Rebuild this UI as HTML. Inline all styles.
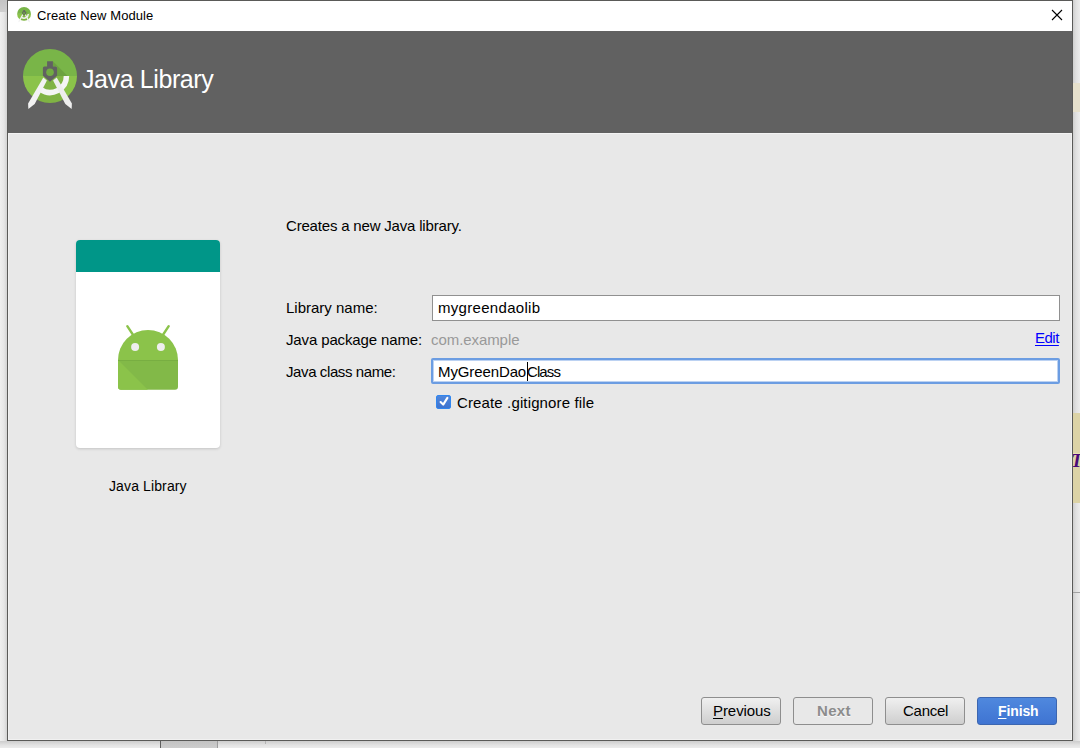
<!DOCTYPE html>
<html><head><meta charset="utf-8">
<style>
*{margin:0;padding:0;box-sizing:border-box}
html,body{width:1080px;height:748px;overflow:hidden;background:#eeeeee;font-family:"Liberation Sans",sans-serif;position:relative}
.abs{position:absolute}
#bgtl{left:0;top:0;width:7px;height:12px;background:linear-gradient(#c4c4c4,#cfcfcf)}
#shl{left:0;top:12px;width:7px;height:736px;background:linear-gradient(90deg,#efefef 0,#e6e6e6 4px,#d2d2d2 7px)}
#shr{left:1073px;top:0;width:7px;height:748px;background:linear-gradient(90deg,#cfcfcf 0,#e0e0e0 3px,#ececec 7px)}
#shb{left:0;top:741px;width:1080px;height:7px;background:linear-gradient(#cdcdcd 0,#e2e2e2 4px,#ececec 7px)}
#yel{left:1073px;top:413px;width:7px;height:90px;background:#dcd3a6}
#yel2{left:1073px;top:83px;width:7px;height:29px;background:#e6e0cc}
#dlg{left:7px;top:0;width:1066px;height:741px;border:1px solid #5a5a58;background:#e8e8e8}
#title{left:8px;top:1px;width:1064px;height:30px;background:#fff}
#hdr{left:8px;top:31px;width:1064px;height:102px;background:#616161}
#hl{left:8px;top:133px;width:1064px;height:607px;border-left:1px solid #f1f1f1;border-bottom:1px solid #f1f1f1;border-right:1px solid #f1f1f1;border-top:1px solid #f3f3f3}
.t{position:absolute;white-space:nowrap;color:#000;line-height:1}
#card{left:76px;top:240px;width:144px;height:208px;background:#fff;border-radius:4px;box-shadow:0 1px 3px rgba(0,0,0,.16);overflow:hidden}
#cardh{left:0;top:0;width:144px;height:32px;background:#009688}
.inp{position:absolute;background:#fff;border:1px solid #909090}
.btn{position:absolute;top:697px;width:80px;height:28px;border:1px solid #8e8e8e;border-radius:3px;background:linear-gradient(#f0f0f0,#cecece);font-size:15px;color:#111;text-align:center;line-height:26px}
</style></head><body>
<div class="abs" id="bgtl"></div>
<div class="abs" id="shl"></div>
<div class="abs" id="shr"></div>
<div class="abs" id="shb"></div>
<div class="abs" id="yel"></div>
<div class="abs" id="yel2"></div>
<div class="abs" style="left:160px;top:741px;width:1px;height:7px;background:#5e5e5e"></div>
<div class="abs" style="left:161px;top:741px;width:56px;height:7px;background:linear-gradient(#c2c2c2,#cdcdcd)"></div>
<div class="abs" style="left:217px;top:741px;width:1px;height:7px;background:#9c9c9c"></div>
<div class="abs" style="left:265px;top:741px;width:1px;height:3px;background:#b4b4b4"></div>
<div class="abs" style="left:1073px;top:592px;width:7px;height:1px;background:#a2a2a2"></div>
<div class="abs" style="left:1073px;top:453px;width:7px;height:1px;background:#e6e0b4"></div>
<div class="t" style="left:1071px;top:451px;font-family:'Liberation Serif',serif;font-style:italic;font-weight:bold;font-size:19px;color:#4a0a78;clip-path:inset(0 0 2px 0)">T</div>
<div class="abs" id="dlg"></div>
<div class="abs" id="title"></div>
<div class="abs" id="hdr"></div>
<div class="abs" id="hl"></div>

<svg class="abs" style="left:0;top:0" width="1080" height="140" viewBox="0 0 1080 140">
<defs>
<clipPath id="cc"><circle cx="0" cy="0" r="27"/></clipPath>
<g id="logo">
<g clip-path="url(#cc)">
<rect x="-28" y="-28" width="56" height="28" fill="#79b548"/>
<rect x="-28" y="0" width="56" height="28" fill="#8bc34a"/>
<polygon points="2.9,-14.8 17.7,0 7.1,0 7.1,-9.6 2.9,-9.6" fill="rgba(0,0,0,0.1)"/>
<polygon points="4,0 17,0 15,12 8,12" fill="rgba(0,0,0,0.07)"/>
<polygon points="-3.1,4.6 3.1,4.6 16,28 -16,28" fill="rgba(0,0,0,0.08)"/>
</g>
<path d="M19.2 0A19.2 19.2 0 0 1 -11.01 15.73L-7.86 11.22A13.7 13.7 0 0 0 13.7 0Z" fill="#f5f5f5"/>
<polygon points="-6.7,1.6 -3.1,4.6 -15.3,28 -21.65,33 -21.9,27.5" fill="#f2f2f2"/>
<polygon points="6.7,1.6 3.1,4.6 15.3,28 21.65,33 21.9,27.5" fill="#eeeeee"/>
<path d="M-2.9 -14.8H2.9V-9.6H5.6Q7.1 -9.6 7.1 -8.1V-0.3L0 5.7L-7.1 -0.3V-8.1Q-7.1 -9.6 -5.6 -9.6H-2.9Z" fill="#616161"/>
<circle cx="0" cy="-3.8" r="3.8" fill="#72ab43"/>
</g>
</defs>
<use href="#logo" transform="translate(50,76)"/>
<use href="#logo" transform="translate(24.06,13.9) scale(0.257)"/>
</svg>
<!-- title -->
<div class="t" style="left:37px;top:9px;font-size:13px;letter-spacing:0.09px;color:#000">Create New Module</div>
<!-- close X -->
<svg class="abs" style="left:1050px;top:8px" width="14" height="14" viewBox="0 0 14 14"><path d="M2 2L12 12M12 2L2 12" stroke="#000" stroke-width="1.1"/></svg>

<!-- header text -->
<div class="t" style="left:82px;top:67px;font-size:25px;letter-spacing:-0.4px;color:#fff">Java Library</div>

<!-- card -->
<div class="abs" id="card"><div class="abs" id="cardh"></div></div>
<svg class="abs" style="left:110px;top:320px" width="76" height="76" viewBox="110 320 76 76">
<defs><clipPath id="ab"><path d="M118 360H178V386.7Q178 389.7 175 389.7H121Q118 389.7 118 386.7Z"/></clipPath></defs>
<line x1="127.3" y1="326.2" x2="133.8" y2="336" stroke="#8bc34a" stroke-width="2.4" stroke-linecap="round"/>
<line x1="168.7" y1="326.2" x2="162.2" y2="336" stroke="#8bc34a" stroke-width="2.4" stroke-linecap="round"/>
<path d="M118 360A30 30 0 0 1 178 360Z" fill="#8bc34a"/>
<g clip-path="url(#ab)">
<rect x="118" y="360" width="60" height="30" fill="#82b948"/>
<polygon points="118,360 148,390 118,390" fill="#8bc34a"/>
<rect x="118" y="360" width="60" height="1" fill="#78ae42"/>
</g>
<circle cx="135.1" cy="347" r="4" fill="#eeeeee"/>
<circle cx="160.9" cy="347" r="4" fill="#eeeeee"/>
</svg>
<div class="t" style="left:109px;top:479px;font-size:14px;letter-spacing:0.12px">Java Library</div>

<div class="t" style="left:286px;top:218px;font-size:15px;letter-spacing:-0.185px">Creates a new Java library.</div>
<div class="t" style="left:286px;top:300px;font-size:15px">Library name:</div>
<div class="t" style="left:286px;top:332px;font-size:15px;letter-spacing:-0.135px">Java package name:</div>
<div class="t" style="left:286px;top:364px;font-size:15px;letter-spacing:-0.4px">Java class name:</div>

<div class="inp" style="left:432px;top:295px;width:628px;height:26px"></div>
<div class="t" style="left:438px;top:300px;font-size:15px;letter-spacing:0.308px">mygreendaolib</div>
<div class="t" style="left:431px;top:332px;font-size:15px;letter-spacing:-0.07px;color:#999">com.example</div>
<div class="t" style="left:1035px;top:330px;font-size:15px;letter-spacing:-0.5px;color:#0000ff;text-decoration:underline;text-underline-offset:2px;text-decoration-thickness:1px">Edit</div>
<div class="inp" style="left:431px;top:358px;width:629px;height:26px;border:2px solid #6c9de2;border-radius:2px;box-shadow:inset 0 0 0 1px #bcd2f2"></div>
<div class="t" style="left:438px;top:364px;font-size:15px;letter-spacing:-0.11px">MyGreenDao</div>
<div class="t" style="left:527px;top:364px;font-size:15px;letter-spacing:-0.9px">Class</div>
<div class="abs" style="left:527px;top:362px;width:1px;height:19px;background:#000"></div>

<div class="abs" style="left:436px;top:395px;width:15px;height:14px;background:linear-gradient(#4f86dc,#3f74cf);border:1px solid #2f86f0;border-radius:2px"></div>
<svg class="abs" style="left:436px;top:395px" width="15" height="14" viewBox="436 395 15 14"><path d="M440.6 402.1L443.2 404.6L447.4 397.9" fill="none" stroke="#fff" stroke-width="2.1" stroke-linecap="round" stroke-linejoin="round"/></svg>
<div class="t" style="left:457px;top:395px;font-size:15px;letter-spacing:0.133px">Create .gitignore file</div>

<div class="btn" style="left:701px"></div>
<div class="t" style="left:713px;top:703px;font-size:15px;letter-spacing:-0.07px"><u style="text-decoration-thickness:1px;text-underline-offset:2px">P</u>revious</div>
<div class="btn" style="left:793px;background:#e8e8e8;border-color:#8e8e8e"></div>
<div class="t" style="left:817px;top:703px;font-size:15px;font-weight:bold;letter-spacing:0.33px;color:#8c8c8c;text-shadow:0 1px 0 #f8f8f8">Next</div>
<div class="btn" style="left:885px"></div>
<div class="t" style="left:903px;top:703px;font-size:15px;letter-spacing:-0.26px">Cancel</div>
<div class="btn" style="left:977px;background:linear-gradient(#4f88de,#3f74d2);border-color:#3c66b0"></div>
<div class="t" style="left:998px;top:704px;font-size:14px;font-weight:bold;letter-spacing:-0.12px;color:#fff"><u style="text-decoration-thickness:1px;text-underline-offset:2px">F</u>inish</div>
</body></html>
